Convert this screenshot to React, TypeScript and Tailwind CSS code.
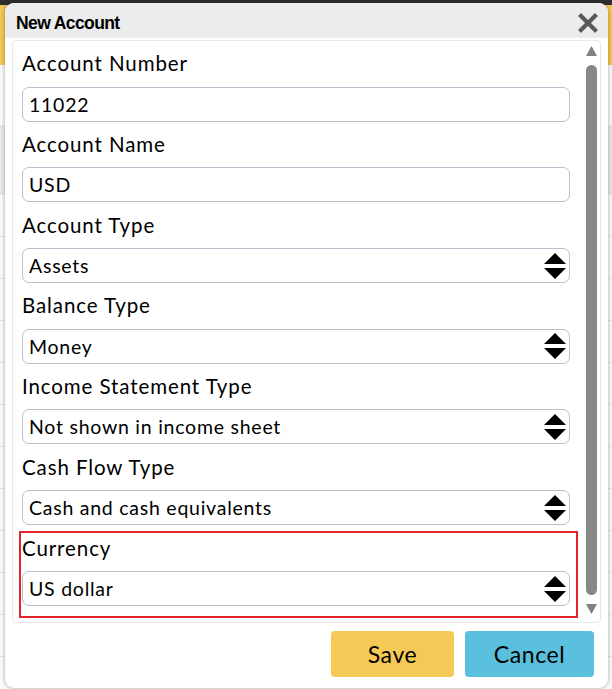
import React from "react";

const fields = [
  { label: "Account Number", value: "11022", select: false },
  { label: "Account Name", value: "USD", select: false },
  { label: "Account Type", value: "Assets", select: true },
  { label: "Balance Type", value: "Money", select: true },
  { label: "Income Statement Type", value: "Not shown in income sheet", select: true },
  { label: "Cash Flow Type", value: "Cash and cash equivalents", select: true },
];

function SortArrows() {
  return (
    <svg width="24" height="28" viewBox="0 0 24 28" className="shrink-0">
      <polygon points="12,1 23,12 1,12" fill="#000" />
      <polygon points="1,16 23,16 12,27" fill="#000" />
    </svg>
  );
}

function Field({ value, select }: { value: string; select: boolean }) {
  return (
    <div className="flex h-[35px] items-center justify-between rounded-[7px] border border-[#bcbccc] bg-white pl-[6px] pr-[2px] text-[19.5px] tracking-[0.75px] text-black">
      <span>{value}</span>
      {select && <SortArrows />}
    </div>
  );
}

function Scrollbar() {
  return (
    <svg width="15" height="581" viewBox="0 0 15 581" className="mr-[1px] shrink-0">
      <polygon points="7.5,5 13,15 2,15" fill="#808080" />
      <rect x="2" y="24" width="11" height="530" rx="5.5" fill="#888888" />
      <polygon points="2,563 13,563 7.5,573" fill="#808080" />
    </svg>
  );
}

export default function App() {
  return (
    <div className="relative h-[689px] w-[612px] overflow-hidden bg-white" style={{ fontFamily: "Lato, 'Open Sans', sans-serif" }}>
      {/* page behind the dialog */}
      <div className="h-[5px] bg-[#2e2e2e]" />
      <div className="h-[60px] bg-[#f2c757]" />
      <div className="h-[60px] bg-[#fafafa]" />
      <div className="h-[70px] bg-[#e9e9e9]" />
      {[0, 1, 2, 3, 4, 5, 6, 7, 8, 9, 10, 11].map((i) => (
        <div key={i} className="h-[42px] border-b border-[#e6e6e6] bg-[#fafafa]" />
      ))}

      {/* dialog */}
      <div className="absolute left-[5px] top-[3px] flex h-[685px] w-[603px] flex-col rounded-[9px] bg-white shadow-[0_0_4px_rgba(0,0,0,0.35)]">
        <div className="flex h-[35px] items-center justify-between rounded-t-[9px] bg-[#ececec] pl-[11px] pr-[10px] pt-[5px]">
          <span className="text-[17.5px] font-bold tracking-[-0.6px] text-black" style={{ fontFamily: "'Liberation Sans', Arial, sans-serif" }}>
            New Account
          </span>
          <svg width="20" height="20" viewBox="0 0 20 20">
            <path d="M3 3 L17 17 M17 3 L3 17" stroke="#595959" strokeWidth="4.2" strokeLinecap="square" />
          </svg>
        </div>

        <div className="mx-[7px] mt-[2px] flex h-[583px] rounded-[4px] border border-[#e8e8e8]">
          <div className="flex-1 pl-[9px] pr-[14px]">
            {fields.map((f) => (
              <div key={f.label}>
                <div className="pb-[9.3px] pt-[8.4px] text-[20.5px] leading-[28px] tracking-[0.9px] text-black">{f.label}</div>
                <Field value={f.value} select={f.select} />
              </div>
            ))}
            <div className="-ml-[3px] -mr-[8px] mt-[6px] border-2 border-[#e3232a] pb-[10px] pl-[1px] pr-[6px] pt-[1px]">
              <div className="pb-[9px] text-[20.5px] leading-[28px] tracking-[0.9px] text-black">Currency</div>
              <Field value="US dollar" select />
            </div>
          </div>
          <Scrollbar />
        </div>

        <div className="mt-[8px] flex justify-end gap-[11px] pr-[14px]">
          <button className="h-[46px] w-[123px] rounded-[4px] bg-[#f5c955] text-[23px] tracking-[0.6px] text-black">Save</button>
          <button className="h-[46px] w-[129px] rounded-[4px] bg-[#5bc0de] text-[23px] tracking-[0.6px] text-black">Cancel</button>
        </div>
      </div>
    </div>
  );
}
